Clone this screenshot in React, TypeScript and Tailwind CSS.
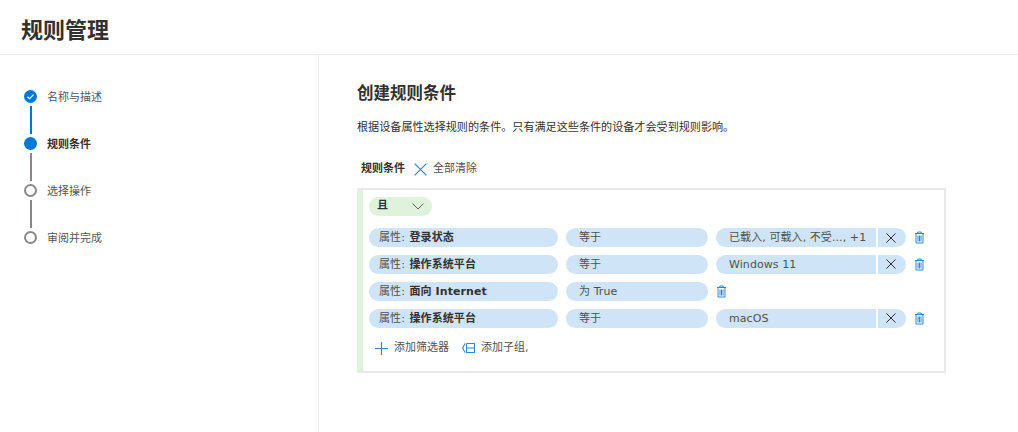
import React from 'react';

const FONT = "font-['DejaVu_Sans','Noto_Sans_CJK_SC',sans-serif]";

const steps = [
  { label: '名称与描述', state: 'done' },
  { label: '规则条件', state: 'current' },
  { label: '选择操作', state: 'todo' },
  { label: '审阅并完成', state: 'todo' },
];

function StepDot({ state }: { state: string }) {
  if (state === 'done') {
    return (
      <div className="flex h-[13px] w-[13px] items-center justify-center rounded-full bg-[#0078d4]">
        <svg width="9" height="9" viewBox="0 0 9 9" fill="none">
          <path d="M1.5 4.8 L3.6 6.6 L7.5 2.6" stroke="white" strokeWidth="1.3" />
        </svg>
      </div>
    );
  }
  if (state === 'current') {
    return <div className="h-[13px] w-[13px] rounded-full bg-[#0078d4]" />;
  }
  return <div className="h-[13px] w-[13px] rounded-full border-2 border-[#8a8886] bg-white" />;
}

function Stepper() {
  return (
    <div className="flex flex-col pl-[24px] pt-[35px]">
      {steps.map((s, i) => (
        <div key={s.label} className="flex gap-[10px]">
          <div className="flex w-[13px] flex-col items-center">
            <StepDot state={s.state} />
            {i < steps.length - 1 && (
              <div className={`mt-[3px] mb-[3px] h-[28px] w-[2px] ${i === 0 ? 'bg-[#0078d4]' : 'bg-[#8a8886]'}`} />
            )}
          </div>
          <span
            className={`pt-[1px] text-[11px] leading-[13px] ${s.state === 'current' ? 'font-bold text-[#323130]' : 'text-[#555]'}`}
          >
            {s.label}
          </span>
        </div>
      ))}
    </div>
  );
}

function TrashIcon() {
  return (
    <svg className="block" width="11" height="13" viewBox="0 0 11 13" fill="none" stroke="#2b88d8" strokeWidth="1">
      <path d="M1 2.5 H10 M3.8 2.5 V1 H7.2 V2.5" />
      <path d="M2 2.5 V12 H9 V2.5" />
      <path d="M4 4.5 V10.5 M5.5 4.5 V10.5 M7 4.5 V10.5" />
    </svg>
  );
}

function CloseIcon({ size = 11, color = '#323130', weight = 1 }: { size?: number; color?: string; weight?: number }) {
  return (
    <svg className="block" width={size} height={size} viewBox="0 0 11 11" fill="none" stroke={color} strokeWidth={(11 / size) * weight}>
      <path d="M0.5 0.5 L10.5 10.5 M10.5 0.5 L0.5 10.5" />
    </svg>
  );
}

function Pill({ className, children }: { className: string; children: React.ReactNode }) {
  return (
    <div className={`flex h-[19px] items-center bg-[#cfe4f6] text-[11px] tracking-[0.08px] text-[#505050] ${className}`}>{children}</div>
  );
}

const rows = [
  { attr: '登录状态', op: '等于', value: '已载入, 可载入, 不受..., +1' },
  { attr: '操作系统平台', op: '等于', value: 'Windows 11' },
  { attr: '面向 Internet', op: '为 True' },
  { attr: '操作系统平台', op: '等于', value: 'macOS' },
];

function ConditionRow({ attr, op, value }: { attr: string; op: string; value?: string }) {
  return (
    <div className="flex h-[19px] items-center">
      <Pill className="w-[189px] rounded-full pl-[10px] pt-[2px]">
        <span>属性:&nbsp;</span>
        <span className="ml-[1px] font-bold text-[#323130]">{attr}</span>
      </Pill>
      <Pill className="ml-[8px] w-[142px] rounded-full pl-[13px] pt-[2px]">{op}</Pill>
      {value ? (
        <>
          <Pill className="ml-[8px] w-[160px] whitespace-nowrap rounded-l-full pl-[13px] pt-[2px]">{value}</Pill>
          <Pill className="ml-[2px] w-[28px] justify-center rounded-r-full pr-[2px]">
            <CloseIcon size={10} />
          </Pill>
          <div className="ml-[8px] flex w-[11px]">
            <TrashIcon />
          </div>
        </>
      ) : (
        <div className="ml-[8px] flex w-[11px]">
          <TrashIcon />
        </div>
      )}
    </div>
  );
}

export default function App() {
  return (
    <main className={`flex h-[432px] w-[1018px] flex-col overflow-hidden bg-white ${FONT}`}>
      <header className="flex h-[55px] shrink-0 items-center border-b border-[#edebe9] pt-[6px] pl-[21px]">
        <h1 className="text-[22px] font-bold text-[#323130]">规则管理</h1>
      </header>

      <div className="flex flex-1">
        <aside className="w-[319px] shrink-0 border-r border-[#edebe9]">
          <Stepper />
        </aside>

        <section className="flex-1 pl-[38px] pt-[27px]">
          <h2 className="text-[16.5px] font-semibold leading-[24px] text-[#323130]">创建规则条件</h2>
          <p className="mt-[15px] text-[11.1px] leading-[14px] text-[#323130]">
            根据设备属性选择规则的条件。只有满足这些条件的设备才会受到规则影响。
          </p>

          <div className="mt-[26px] flex h-[16px] items-center pl-[4px] text-[11px]">
            <span className="font-bold text-[#323130]">规则条件</span>
            <span className="ml-[9px]">
              <CloseIcon size={13} color="#2b88d8" weight={1.2} />
            </span>
            <span className="ml-[6px] text-[#505050]">全部清除</span>
          </div>

          <div className="mt-[11px] h-[185px] w-[589px] border-2 border-l-0 border-[#e8e8e8]">
            <div className="h-full border-l-[6px] border-[#dff3dc] pl-[6px] pt-[7px]">
              <div className="flex h-[19px] w-[63px] items-center justify-between rounded-full bg-[#dff3dc] pl-[8px] pr-[8px] text-[11px] font-bold text-[#323130]">
                <span>且</span>
                <svg width="12" height="7" viewBox="0 0 12 7" fill="none" stroke="#605e5c" strokeWidth="1">
                  <path d="M0.5 0.5 L6 6 L11.5 0.5" />
                </svg>
              </div>

              <div className="mt-[12px] flex flex-col gap-[7.85px]">
                {rows.map((r, i) => (
                  <ConditionRow key={i} {...r} />
                ))}
              </div>

              <div className="mt-[12.5px] flex h-[16px] items-center pl-[6px] text-[11px] text-[#505050]">
                <svg width="13" height="13" viewBox="0 0 13 13" fill="none" stroke="#2b88d8" strokeWidth="1.2">
                  <path d="M6.5 0 V13 M0 6.5 H13" />
                </svg>
                <span className="ml-[6px]">添加筛选器</span>
                <svg className="ml-[13px]" width="13" height="10" viewBox="0 0 13 10" fill="none" stroke="#2b88d8" strokeWidth="1.1">
                  <path d="M3 0.5 L0.7 5 L3 9.5" />
                  <path d="M4.5 0.5 H12.5 V9.5 H4.5 V0.5 M4.5 5 H12.5" />
                </svg>
                <span className="ml-[6px]">添加子组,</span>
              </div>
            </div>
          </div>
        </section>
      </div>
    </main>
  );
}
